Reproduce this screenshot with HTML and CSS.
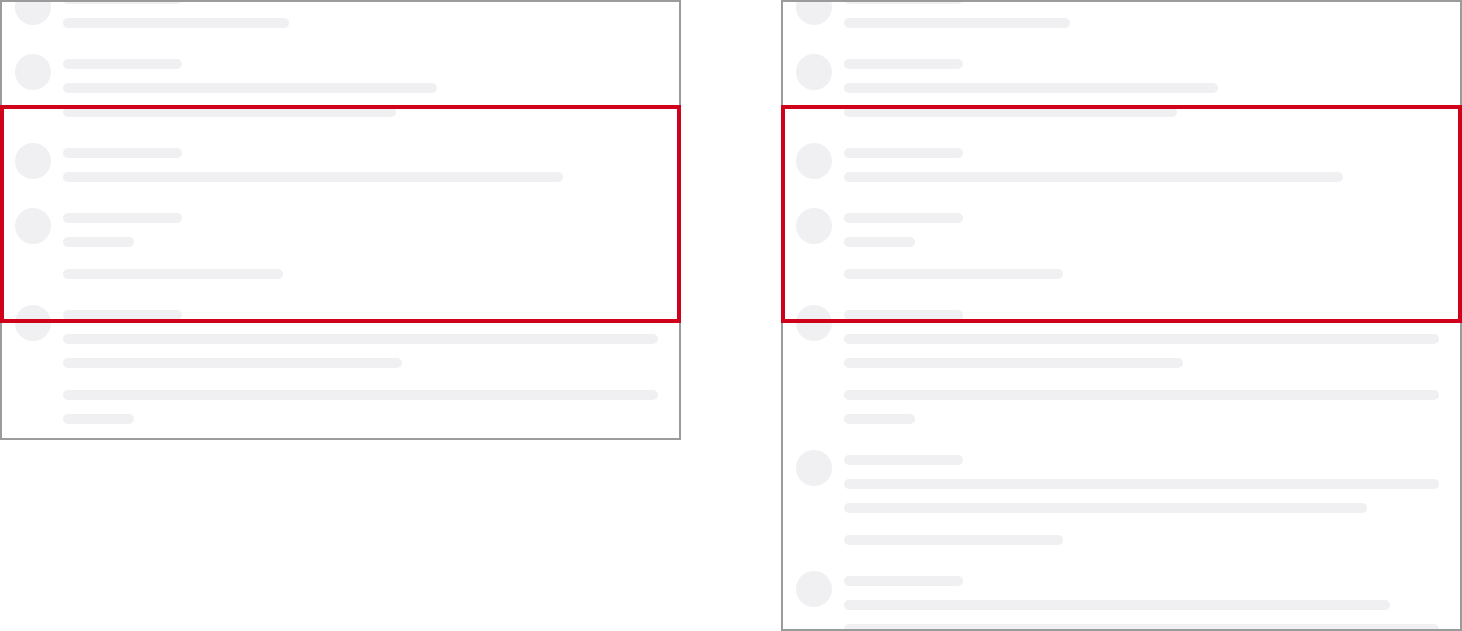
FILE: index.html
```html
<!DOCTYPE html>
<html lang="en">
<head>
<meta charset="utf-8">
<title>Skeleton list</title>
<link rel="stylesheet" href="styles.css">
</head>
<body>
<div class="page">
  <section class="column column-short">
    <div class="panel">
      <div class="list">
        <div class="row"><div class="avatar"></div><div class="body"><div class="bar title"></div><div class="bar line" style="width:226px"></div></div></div>
        <div class="row"><div class="avatar"></div><div class="body"><div class="bar title"></div><div class="bar line" style="width:374px"></div><div class="bar line" style="width:333px"></div></div></div>
        <div class="row"><div class="avatar"></div><div class="body"><div class="bar title"></div><div class="bar line" style="width:500px"></div></div></div>
        <div class="row"><div class="avatar"></div><div class="body"><div class="bar title"></div><div class="bar line" style="width:71px"></div><div class="bar line para" style="width:220px"></div></div></div>
        <div class="row"><div class="avatar"></div><div class="body"><div class="bar title"></div><div class="bar line full"></div><div class="bar line" style="width:339px"></div><div class="bar line para full"></div><div class="bar line" style="width:71px"></div></div></div>
      </div>
    </div>
    <div class="highlight"></div>
  </section>
  <section class="column column-tall">
    <div class="panel">
      <div class="list">
        <div class="row"><div class="avatar"></div><div class="body"><div class="bar title"></div><div class="bar line" style="width:226px"></div></div></div>
        <div class="row"><div class="avatar"></div><div class="body"><div class="bar title"></div><div class="bar line" style="width:374px"></div><div class="bar line" style="width:333px"></div></div></div>
        <div class="row"><div class="avatar"></div><div class="body"><div class="bar title"></div><div class="bar line" style="width:499px"></div></div></div>
        <div class="row"><div class="avatar"></div><div class="body"><div class="bar title"></div><div class="bar line" style="width:71px"></div><div class="bar line para" style="width:219px"></div></div></div>
        <div class="row"><div class="avatar"></div><div class="body"><div class="bar title"></div><div class="bar line full"></div><div class="bar line" style="width:339px"></div><div class="bar line para full"></div><div class="bar line" style="width:71px"></div></div></div>
        <div class="row"><div class="avatar"></div><div class="body"><div class="bar title"></div><div class="bar line full"></div><div class="bar line" style="width:523px"></div><div class="bar line para" style="width:219px"></div></div></div>
        <div class="row"><div class="avatar"></div><div class="body"><div class="bar title"></div><div class="bar line" style="width:546px"></div><div class="bar line full"></div><div class="bar line" style="width:300px"></div></div></div>
      </div>
    </div>
    <div class="highlight"></div>
  </section>
</div>
</body>
</html>
```

FILE: styles.css
```css
* {
  box-sizing: border-box;
}

html, body {
  margin: 0;
  padding: 0;
  background: #ffffff;
  font-family: "Liberation Sans", Arial, sans-serif;
}

.page {
  display: grid;
  grid-template-columns: 681px 681px;
  column-gap: 100px;
  align-items: start;
}

.column {
  position: relative;
}

.panel {
  border: 2px solid #9b9b9b;
  overflow: hidden;
  background: #ffffff;
}

.column-short .panel {
  height: 440px;
}

.column-tall .panel {
  height: 631px;
}

.list {
  display: flex;
  flex-direction: column;
  gap: 26px;
  margin-top: -13px;
}

.row {
  display: flex;
  align-items: flex-start;
  gap: 12px;
  padding: 0 21px 0 13px;
}

.avatar {
  flex: none;
  width: 36px;
  height: 36px;
  border-radius: 50%;
  background: #f0f0f2;
}

.body {
  flex: 1;
  min-width: 0;
  display: flex;
  flex-direction: column;
  align-items: flex-start;
  padding-top: 5px;
}

.bar {
  height: 10px;
  border-radius: 5px;
  background: #f0f0f2;
}

.bar.title {
  width: 119px;
}

.bar.line {
  margin-top: 14px;
}

.bar.line.para {
  margin-top: 22px;
}

.bar.full {
  width: 100%;
}

.highlight {
  position: absolute;
  top: 105px;
  left: 0;
  right: 0;
  height: 218px;
  border: 4px solid #d0011b;
  pointer-events: none;
}
```
